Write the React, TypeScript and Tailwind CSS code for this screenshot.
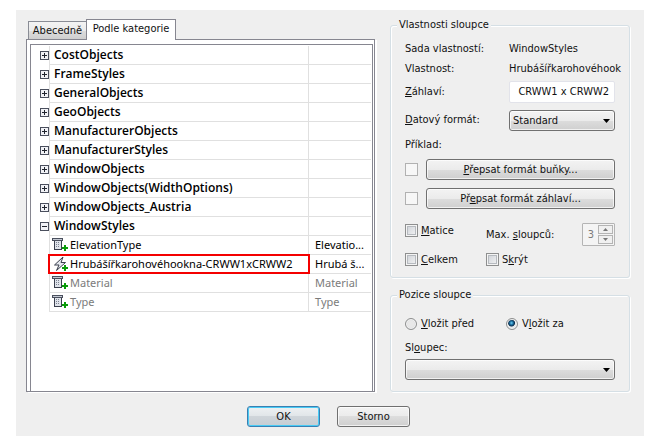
import React, { ReactNode, useState } from "react";

type Property = { name: string; value: string; icon: "property" | "formula"; muted?: boolean; marked?: boolean };
type Category = { name: string; open?: boolean; items?: Property[] };

const categories: Category[] = [
  { name: "CostObjects" },
  { name: "FrameStyles" },
  { name: "GeneralObjects" },
  { name: "GeoObjects" },
  { name: "ManufacturerObjects" },
  { name: "ManufacturerStyles" },
  { name: "WindowObjects" },
  { name: "WindowObjects(WidthOptions)" },
  { name: "WindowObjects_Austria" },
  {
    name: "WindowStyles",
    open: true,
    items: [
      { name: "ElevationType", value: "Elevatio...", icon: "property" },
      { name: "Hrubášířkarohovéhookna-CRWW1xCRWW2", value: "Hrubá š...", icon: "formula", marked: true },
      { name: "Material", value: "Material", icon: "property", muted: true },
      { name: "Type", value: "Type", icon: "property", muted: true },
    ],
  },
];

function ExpandIcon({ open }: { open?: boolean }) {
  return (
    <svg width="9" height="9" viewBox="0 0 9 9" shapeRendering="crispEdges" aria-hidden="true">
      <rect x="0.5" y="0.5" width="8" height="8" fill="#f1f2f6" stroke="#4a4f5d" />
      <path d={open ? "M2 4.5h5" : "M2 4.5h5M4.5 2v5"} stroke="#20242e" />
    </svg>
  );
}

function PropertyIcon() {
  return (
    <svg className="block shrink-0" width="16" height="16" viewBox="0 0 16 16" shapeRendering="crispEdges" aria-hidden="true">
      <rect x="2" y="4" width="8" height="9" fill="#3a3f4d" />
      <rect x="3" y="4" width="6" height="8" fill="#dfe3ea" />
      <rect x="0" y="1" width="11" height="3" fill="#4a4f5d" />
      <rect x="1" y="2" width="9" height="1" fill="#c4c9d3" />
      <path d="M4 5.5h4M4 7.5h4M4 9.5h4" stroke="#7c8291" strokeDasharray="1 1" />
      <path d="M12 8h2v2h2v2h-2v2h-2v-2h-2v-2h2z" fill="#0a9c0a" />
    </svg>
  );
}

function FormulaIcon() {
  return (
    <svg className="block shrink-0" width="16" height="16" viewBox="0 0 16 16" aria-hidden="true">
      <path d="M11 1 2.5 9H7L4.5 14.5l9-8H9z" fill="#e6e9ef" stroke="#3a3f4d" strokeLinejoin="round" />
      <path d="M12 9h2v2h2v2h-2v2h-2v-2h-2v-2h2z" fill="#0a9c0a" shapeRendering="crispEdges" />
    </svg>
  );
}

function PropertyTable() {
  return (
    <table className="w-full table-fixed border-separate border-spacing-0 text-[11px] leading-[18px] text-black">
      <colgroup>
        <col className="w-[18px]" />
        <col />
        <col className="w-[63px]" />
      </colgroup>
      <tbody>
        {categories.map((category) => (
          <React.Fragment key={category.name}>
            <tr className="h-[19px]">
              <td className="p-0 pl-[9px] align-middle">
                <button type="button" aria-label={category.name} aria-expanded={!!category.open} className="flex h-[9px] w-[9px]">
                  <ExpandIcon open={category.open} />
                </button>
              </td>
              <td className="border-b border-l border-[#e0e0e0] p-0 pl-1 font-['Open_Sans','Noto_Sans',sans-serif] text-[12px] font-semibold whitespace-nowrap">
                {category.name}
              </td>
              <td className="border-b border-l border-[#e0e0e0] p-0" />
            </tr>
            {category.items?.map((item) => (
              <tr key={item.name} className={item.muted ? "h-[19px] text-[#7b7b7b]" : "h-[19px]"}>
                <td className="p-0" />
                <td className="relative border-b border-l border-[#e0e0e0] p-0 pl-[2px] whitespace-nowrap">
                  <div className="flex h-[18px] items-center gap-[2px]">
                    {item.icon === "formula" ? <FormulaIcon /> : <PropertyIcon />}
                    <span>{item.name}</span>
                  </div>
                  {item.marked && <span className="absolute -inset-x-[2px] -inset-y-[1px] border-2 border-[#f40000]" />}
                </td>
                <td className="border-b border-l border-[#e0e0e0] p-0 pl-[6px] whitespace-nowrap">{item.value}</td>
              </tr>
            ))}
          </React.Fragment>
        ))}
      </tbody>
    </table>
  );
}

const buttonFace =
  "h-[21px] rounded-[3px] border border-[#707070] bg-[linear-gradient(#f3f3f3,#ebebeb_50%,#dddddd_50%,#cfcfcf)] shadow-[inset_0_0_0_1px_rgba(255,255,255,0.7)]";

function Group({ title, className, children }: { title: string; className: string; children: ReactNode }) {
  return (
    <fieldset
      className={`min-w-0 rounded-[3px] border border-[#d5dfe5] px-[14px] shadow-[inset_1px_1px_0_#fff,1px_1px_0_#fff] ${className}`}
    >
      <legend className="-ml-[8px] bg-[#efefef] px-[2px] leading-4">{title}</legend>
      {children}
    </fieldset>
  );
}

function Dropdown({ id, options }: { id: string; options: string[] }) {
  return (
    <div className="relative w-full">
      <select id={id} className={`block w-full appearance-none pl-[3px] text-[11px] leading-[19px] ${buttonFace}`}>
        {options.map((option) => (
          <option key={option}>{option}</option>
        ))}
      </select>
      <svg className="pointer-events-none absolute top-[9px] right-[5px]" width="7" height="4" viewBox="0 0 7 4" aria-hidden="true">
        <path d="M0 0h7L3.5 4z" fill="#000" />
      </svg>
    </div>
  );
}

function Check({ children }: { children: ReactNode }) {
  return (
    <label className="flex h-[15px] items-center gap-[3px]">
      <input
        type="checkbox"
        className="h-[13px] w-[13px] shrink-0 appearance-none border border-[#8e8f8f] bg-[linear-gradient(135deg,#cbcfd5,#f6f6f6)] shadow-[inset_0_0_0_1px_#f4f4f4,inset_0_0_0_2px_#b6babf] checked:bg-[#4b6fa5]"
      />
      <span>{children}</span>
    </label>
  );
}

function OverrideRow({ label, children }: { label: string; children: ReactNode }) {
  return (
    <div className="flex items-center gap-2">
      <input type="checkbox" disabled aria-label={label} className="h-[13px] w-[13px] shrink-0 appearance-none border border-[#b1b1b1] bg-[#f7f7f7]" />
      <button type="button" className={`flex-1 ${buttonFace}`}>
        {children}
      </button>
    </div>
  );
}

function Radio({ checked, onChange, children }: { checked: boolean; onChange: () => void; children: ReactNode }) {
  return (
    <label className="flex h-4 items-center gap-1">
      <input
        type="radio"
        name="position"
        checked={checked}
        onChange={onChange}
        className="h-3 w-3 shrink-0 appearance-none rounded-full border border-[#8e8f8f] bg-[radial-gradient(circle,#e8e8e8_40%,#cfd2d6)] shadow-[inset_0_0_0_1px_#f4f4f4] checked:bg-[radial-gradient(circle_at_45%_40%,#6fd0f5_0,#1a6d9e_22%,#0e2f4d_38%,#e4e8ea_48%)]"
      />
      <span>{children}</span>
    </label>
  );
}

function StepButton({ label, path }: { label: string; path: string }) {
  return (
    <button type="button" disabled aria-label={label} className="flex flex-1 items-center justify-center border border-[#b4b4b4] bg-[#f0f0f0]">
      <svg width="5" height="3" viewBox="0 0 5 3" aria-hidden="true">
        <path d={path} fill="#777" />
      </svg>
    </button>
  );
}

export default function App() {
  const [position, setPosition] = useState("after");

  return (
    <div className="bg-white pt-[10px] pr-[13px] pb-3 pl-4 font-['DejaVu_Sans_Condensed','DejaVu_Sans',sans-serif] text-[11px] leading-4 text-[#111]">
      <main className="bg-[#efefef] pb-[9px]">
        <div className="flex items-start gap-[15px] pr-[14px] pl-[10px]">
          <section className="min-w-0 flex-1 pt-[9px]">
            <div role="tablist" className="relative -mb-[1px] flex items-end pl-[2px]">
              <button
                type="button"
                role="tab"
                aria-selected="false"
                className="mb-[1px] h-[18px] w-[58px] border border-r-0 border-b-0 border-[#898c95] bg-[linear-gradient(#f3f3f3,#ebebeb_50%,#dddddd_50%,#cfcfcf)] leading-4"
              >
                Abecedně
              </button>
              <button type="button" role="tab" aria-selected="true" className="h-[21px] w-[90px] border border-b-0 border-[#868690] bg-white pb-[2px] leading-4">
                Podle kategorie
              </button>
            </div>
            <div className="border border-[#868690] bg-white pt-1 pr-[1px] pl-[3px] shadow-[2px_1px_0_#fff]">
              <div className="h-[347px] border border-b-0 border-[#868690] pt-[1px] pr-[1px] font-['Noto_Sans','Open_Sans',sans-serif]">
                <PropertyTable />
              </div>
            </div>
          </section>

          <div className="w-[240px] shrink-0 pt-[7px]">
            <Group title="Vlastnosti sloupce" className="pb-[10px]">
              <div className="mt-[6px] grid grid-cols-[104px_minmax(0,1fr)] items-center">
                <span className="leading-5">Sada vlastností:</span>
                <span className="leading-5">WindowStyles</span>
                <span className="leading-5">Vlastnost:</span>
                <span className="leading-5 whitespace-nowrap">Hrubášířkarohovéhook</span>
                <label htmlFor="heading" className="mt-[2px]">
                  <u>Z</u>áhlaví:
                </label>
                <input
                  id="heading"
                  defaultValue="CRWW1 x CRWW2"
                  className="mt-[2px] h-[22px] w-full rounded-[2px] border border-[#e2e3ea] bg-white pr-[5px] pb-[2px] text-right"
                />
                <label htmlFor="format" className="mt-[5px]">
                  <u>D</u>atový formát:
                </label>
                <div className="mt-[7px]">
                  <Dropdown id="format" options={["Standard"]} />
                </div>
              </div>
              <p className="mt-[6px]">Příklad:</p>
              <div className="mt-[6px] flex flex-col gap-2">
                <OverrideRow label="Přepsat formát buňky">
                  <u>P</u>řepsat formát buňky...
                </OverrideRow>
                <OverrideRow label="Přepsat formát záhlaví">
                  Př<u>e</u>psat formát záhlaví...
                </OverrideRow>
              </div>
              <div className="mt-[14px] grid grid-cols-[81px_minmax(0,1fr)] gap-y-[6px]">
                <Check>
                  <u>M</u>atice
                </Check>
                <div className="flex items-center justify-between">
                  <label htmlFor="columns">
                    Max. <u>s</u>loupců:
                  </label>
                  <div className="flex h-[23px] w-[33px] rounded-[1px] border border-[#b4b4b4] bg-[#f4f4f4] p-[1px] text-[#7b7b7b]">
                    <input id="columns" disabled defaultValue="3" className="w-[14px] min-w-0 pr-1 text-right" />
                    <div className="flex flex-1 flex-col gap-[1px]">
                      <StepButton label="Více" path="M2.5 0 5 3H0z" />
                      <StepButton label="Méně" path="M0 0h5L2.5 3z" />
                    </div>
                  </div>
                </div>
                <Check>
                  <u>C</u>elkem
                </Check>
                <Check>
                  S<u>k</u>rýt
                </Check>
              </div>
            </Group>

            <Group title="Pozice sloupce" className="mt-[9px] pb-[11px]">
              <div className="mt-[13px] grid grid-cols-[101px_minmax(0,1fr)]">
                <Radio checked={position === "before"} onChange={() => setPosition("before")}>
                  <u>V</u>ložit před
                </Radio>
                <Radio checked={position === "after"} onChange={() => setPosition("after")}>
                  V<u>l</u>ožit za
                </Radio>
              </div>
              <label htmlFor="column" className="mt-2 mb-[3px] block">
                Sl<u>o</u>upec:
              </label>
              <Dropdown id="column" options={[""]} />
            </Group>
          </div>
        </div>

        <div className="mt-[14px] flex justify-center gap-[17px] pr-[3px]">
          <button
            type="submit"
            className="h-[21px] w-[73px] rounded-[3px] border border-[#3c7fb1] bg-[linear-gradient(#eef1f3,#e0e5e8_50%,#cfd5da_50%,#c6cdd3)] shadow-[inset_0_0_0_1px_#48cbf5]"
          >
            OK
          </button>
          <button type="button" className={`w-[73px] ${buttonFace}`}>
            Storno
          </button>
        </div>
      </main>
    </div>
  );
}
